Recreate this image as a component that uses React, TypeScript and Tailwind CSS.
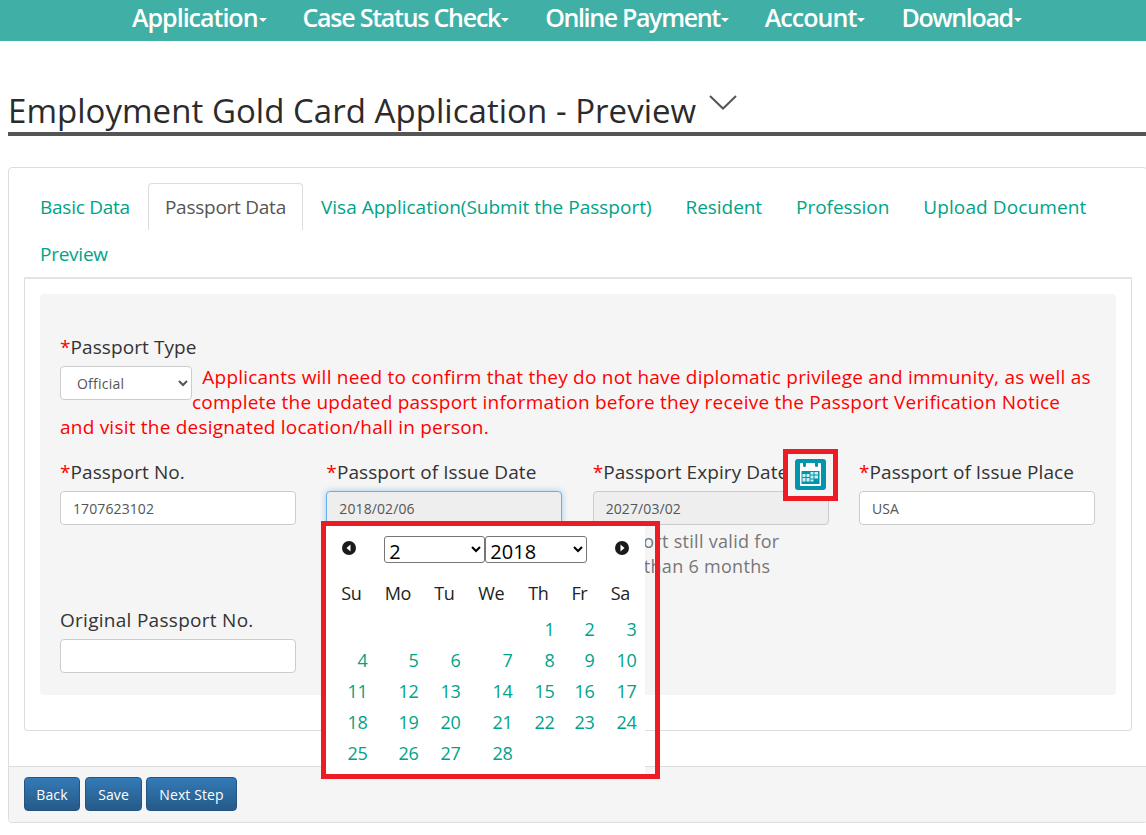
import React from "react";

const F = { fontFamily: '"Open Sans","Noto Sans",sans-serif' };

const navItems = [
  ["Application", "tracking-[-1px]"],
  ["Case Status Check", "tracking-[-1.25px]"],
  ["Online Payment", "tracking-[-1.35px]"],
  ["Account", "tracking-[-0.95px]"],
  ["Download", "tracking-[-1.35px]"],
];

function NavItem({ label, cls }: { label: string; cls: string }) {
  return (
    <a className={`flex items-start text-white text-[25px] font-semibold leading-[34px] ${cls}`}>
      {label}
      <span className="ml-[1px] mt-[18px] w-0 h-0 border-x-[4px] border-x-transparent border-t-[4px] border-t-white" />
    </a>
  );
}

function Label({ text, req = true, cls = "tracking-[0.08px]" }: { text: string; req?: boolean; cls?: string }) {
  return (
    <div className={`h-[27px] mb-[5px] text-[19px] leading-[27px] font-medium text-[#333] whitespace-nowrap ${cls}`}>
      {req && <span className="text-[#f00]">*</span>}
      {text}
    </div>
  );
}

function TextInput({ value, cls = "" }: { value: string; cls?: string }) {
  return (
    <div className={`h-[34px] px-3 pt-[1px] flex items-center text-[14px] text-[#555] border rounded-[4px] tracking-[0.1px] ${cls}`}>
      {value}
    </div>
  );
}

const tabs = [
  ["Basic Data", "tracking-[-0.25px]"],
  ["Passport Data", "tracking-[-0.25px]"],
  ["Visa Application(Submit the Passport)", "tracking-[0px]"],
  ["Resident", "tracking-[-0.05px]"],
  ["Profession", "tracking-[-0.05px]"],
  ["Upload Document", "tracking-[0.1px]"],
  ["Preview", "tracking-[-0.25px]"],
];
const colsCls = "grid grid-cols-[42px_51px_42px_52px_42px_40px_42px]";
const days = ["", "", "", "", "1", "2", "3", "4", "5", "6", "7", "8", "9", "10", "11", "12", "13", "14", "15", "16", "17", "18", "19", "20", "21", "22", "23", "24", "25", "26", "27", "28", "", "", ""];

function Arrow({ dir }: { dir: "l" | "r" }) {
  return (
    <svg width="14" height="14" viewBox="0 0 14 14">
      <circle cx="7" cy="7" r="7" fill="#1a1a1a" />
      {dir === "l" ? <path d="M8.5 3.5 L4.5 7 L8.5 10.5 Z" fill="#fff" /> : <path d="M5.5 3.5 L9.5 7 L5.5 10.5 Z" fill="#fff" />}
    </svg>
  );
}

function Calendar() {
  return (
    <div className="absolute left-0 top-[34px] z-10 w-[319px] h-[249px] bg-white">
      <div className="relative h-[63px]">
        <div className="absolute left-[16px] top-[16px]"><Arrow dir="l" /></div>
        <div className="absolute left-[58px] top-[11px] flex gap-0">
          <select defaultValue="2" className="w-[101px] h-[27px] pl-0 text-[20px] leading-[24px] text-black bg-white border border-[#767676] rounded-[3px] [appearance:auto]">
            <option>2</option>
          </select>
          <select defaultValue="2018" className="w-[102px] h-[27px] pl-0 text-[20px] leading-[24px] text-black bg-white border border-[#767676] rounded-[3px] [appearance:auto]">
            <option>2018</option>
          </select>
        </div>
        <div className="absolute left-[289px] top-[16px]"><Arrow dir="r" /></div>
      </div>
      <div className={`${colsCls} ml-[4px] h-[40px] text-[18px] font-medium text-[#222] tracking-[-0.4px]`}>
        {["Su", "Mo", "Tu", "We", "Th", "Fr", "Sa"].map((d) => (
          <div key={d} className="text-center leading-[26px] relative -top-[8px]">{d}</div>
        ))}
      </div>
      <div className={`${colsCls} ml-[4px] -mt-[14px] auto-rows-[31px] text-[18px] text-[#00a388] tracking-[-0.4px]`}>
        {days.map((d, i) => (
          <div key={i} className="text-right pr-[5px] leading-[31px]">{d}</div>
        ))}
      </div>
    </div>
  );
}

function CalIcon() {
  return (
    <svg width="31" height="31" viewBox="0 0 31 31">
      <rect x="0" y="0" width="31" height="31" rx="3" fill="#0095ad" />
      <rect x="5" y="4" width="21" height="23" rx="1" fill="#fff" />
      <rect x="8" y="2" width="3" height="6" rx="1.5" fill="#0095ad" />
      <rect x="20" y="2" width="3" height="6" rx="1.5" fill="#0095ad" />
      <rect x="6.5" y="12" width="18" height="13" fill="#0095ad" />
      <path d="M7.5 15h3v3h-3zM11.5 15h3v3h-3zM15.5 13h3v2.5h-3zM19.5 13h3.5v2.5h-3.5zM15.5 16.5h3v3h-3zM19.5 16.5h3.5v3h-3.5zM7.5 19h3v3.5h-3zM11.5 19h3v3.5h-3zM15.5 20.5h3v2h-3z" fill="#cdeef3" />
    </svg>
  );
}

export default function App() {
  return (
    <div className="w-[1146px] h-[835px] overflow-hidden bg-white text-[#333]" style={F}>
      <nav className="h-[41px] bg-[#40afa5] flex justify-start gap-[36px] pl-[132px] pt-0">
        {navItems.map(([n, c]) => (
          <NavItem key={n} label={n} cls={c} />
        ))}
      </nav>

      <div className="ml-2 mt-[45px] h-[50px] border-b-4 border-[#555] flex items-end w-[1138px]">
        <h1 className="text-[33px] leading-[46px] font-medium text-[#2b2b2b] tracking-[0.04px] whitespace-nowrap relative top-[2px]">
          Employment Gold Card Application - Preview
        </h1>
        <svg className="ml-[13px] mb-[22px]" width="28" height="15" viewBox="0 0 28 15">
          <path d="M1 1 L14 13.5 L27 1" fill="none" stroke="#555" strokeWidth="2" />
        </svg>
      </div>

      <section className="ml-2 mt-[31px] w-[1140px] h-[656px] border border-[#ddd] rounded-[4px] flex flex-col">
        <div className="px-[15px] pt-[15px] flex-1">
          <ul className="flex flex-wrap border-b-2 border-[#e4e4e4] h-[96px]">
            {tabs.map(([t, c], i) => (
              <li
                key={t}
                className={`h-[47px] px-4 mr-[2px] text-[19px] whitespace-nowrap ${c} ${
                  i === 1
                    ? "leading-[47px] bg-white text-[#555] border border-b-0 border-[#ddd] rounded-t-[4px]"
                    : "leading-[49px] text-[#00a388]"
                }`}
              >
                {t}
              </li>
            ))}
          </ul>
          <div className="border border-t-0 border-[#ddd] rounded-b-[4px] h-[452px] p-[15px]">
            <div className="bg-[#f5f5f5] rounded-[4px] h-[401px] px-5 pt-[40px]">
              <Label text="Passport Type" />
              <div className="h-[94px] text-[19px] leading-[25px] text-[#f00] tracking-[0.22px] whitespace-nowrap -mt-[1px]">
                <select defaultValue="Official" className="float-left mt-[1px] w-[132px] h-[34px] pl-3 text-[14px] text-[#555] bg-white border border-[#ccc] rounded-[4px] [appearance:auto]">
                  <option>Official</option>
                </select>
                &nbsp;&nbsp;Applicants will need to confirm that they do not have diplomatic privilege and immunity, as well as
                <br />
                complete the updated passport information before they receive the Passport Verification Notice
                <br />
                and visit the designated location/hall in person.
              </div>

              <div className="grid grid-cols-[236px_236px_236px_236px] gap-x-[30.33px] h-[148px]">
                <div>
                  <Label text="Passport No." />
                  <TextInput value="1707623102" cls="bg-white border-[#ccc]" />
                </div>
                <div className="relative">
                  <Label text="Passport of Issue Date" />
                  <div className="relative">
                    <TextInput value="2018/02/06" cls="bg-[#eee] border-[#66afe9] shadow-[0_0_6px_rgba(102,175,233,0.6)]" />
                    <Calendar />
                    <div className="absolute z-20 left-[-5px] top-[30px] w-[339px] h-[258px] border-[5px] border-[#ed1c24]" />
                  </div>
                </div>
                <div className="relative">
                  <Label text="Passport Expiry Date" />
                  <div className="absolute left-[190px] top-[-10px] w-[55px] h-[52px] border-[5px] border-[#ed1c24] bg-[#f5f5f5] pt-[5px] pl-[7px]">
                    <CalIcon />
                  </div>
                  <TextInput value="2027/03/02" cls="bg-[#eee] border-[#ccc]" />
                  <div className="mt-[4px] text-[18px] leading-[25px] text-[#777] tracking-[0.3px] whitespace-nowrap">
                    Passport still valid for
                    <br />
                    more than 6 months
                  </div>
                </div>
                <div>
                  <Label text="Passport of Issue Place" />
                  <TextInput value="USA" cls="bg-white border-[#ccc]" />
                </div>
              </div>

              <div className="w-[236px]">
                <Label text="Original Passport No." req={false} cls="tracking-[0.28px]" />
                <TextInput value="" cls="bg-white border-[#ccc]" />
              </div>
            </div>
          </div>
        </div>
        <div className="h-[56px] bg-[#f5f5f5] border-t border-[#ddd] px-[15px] pt-[10px] flex rounded-b-[4px]">
          {[["Back", "w-[56px]"], ["Save", "w-[57px] ml-[5px]"], ["Next Step", "w-[91px] ml-[4px]"]].map(([t, w]) => (
            <button
              key={t}
              className={`${w} h-[34px] text-[14px] text-white tracking-[0.1px] border border-[#245580] rounded-[4px] bg-gradient-to-b from-[#337ab7] to-[#265a88]`}
            >
              {t}
            </button>
          ))}
        </div>
      </section>
    </div>
  );
}
